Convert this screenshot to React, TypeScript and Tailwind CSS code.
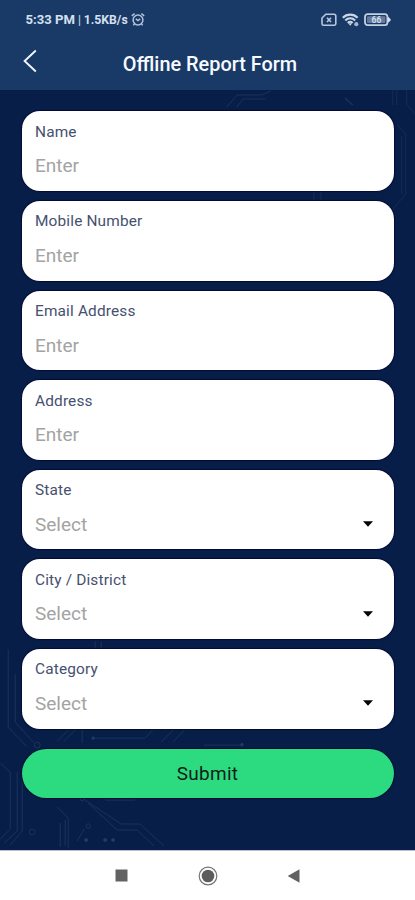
import React from "react";

type Field = { label: string; kind: "input" | "select" };

const fields: Field[] = [
  { label: "Name", kind: "input" },
  { label: "Mobile Number", kind: "input" },
  { label: "Email Address", kind: "input" },
  { label: "Address", kind: "input" },
  { label: "State", kind: "select" },
  { label: "City / District", kind: "select" },
  { label: "Category", kind: "select" },
];

function AlarmIcon() {
  return (
    <svg className="ml-[3px] h-[15px] w-[14px]" viewBox="0 0 14 15" fill="none" stroke="#b3c2da" strokeWidth="1.5">
      <circle cx="7" cy="8" r="4.9" />
      <path d="M.8 3.8 3.6 1.6M13.2 3.8 10.4 1.6M4.8 6.9 7 8.5 9.2 6.9M3.4 12 2.4 13.4M10.6 12l1 1.4" />
    </svg>
  );
}

function SimIcon() {
  return (
    <svg className="h-[14px] w-[16px]" viewBox="0 0 16 14" fill="none" stroke="#bac7db" strokeWidth="1.6">
      <path d="M4.8 1.2h8.2a1.8 1.8 0 0 1 1.8 1.8v7.8a1.4 1.4 0 0 1-1.4 1.4H2.4A1.4 1.4 0 0 1 1 10.8V5z" />
      <path d="m6 4.8 4 4.2M10 4.8 6 9" />
    </svg>
  );
}

function WifiIcon() {
  return (
    <svg className="ml-[5px] h-[14px] w-[17px]" viewBox="0 0 17 14" fill="none" stroke="#cbd6e6" strokeWidth="2.1">
      <path d="M.8 4.7a10.4 10.4 0 0 1 14.8 0M3.3 7.4a6.8 6.8 0 0 1 9.8 0M5.8 9.9a3.4 3.4 0 0 1 4.8 0" />
      <path d="M6.2 10.3h4L8.2 12.8z" fill="#cbd6e6" stroke="none" />
      <circle cx="14.3" cy="11.2" r="2.1" fill="#a5b4cb" stroke="none" />
    </svg>
  );
}

function BatteryIcon() {
  return (
    <svg className="ml-[5px] h-[14px] w-[27px]" viewBox="0 0 27 14" fill="none">
      <rect x="1" y="1.2" width="22.4" height="11" rx="2.6" stroke="#c5d0e1" strokeWidth="1.8" />
      <rect x="3" y="3.3" width="18.4" height="6.8" rx="1" fill="#64799b" />
      <path d="M24 3.8 26.6 6v1.8L24 9.8z" fill="#d5deeb" />
      <text x="12.4" y="9.7" textAnchor="middle" fontFamily="Roboto, sans-serif" fontSize="8.5" fontWeight="700" fill="#d3deeb">
        66
      </text>
    </svg>
  );
}

function CircuitPattern() {
  return (
    <svg className="pointer-events-none absolute inset-0 h-full w-full" viewBox="0 0 415 760" fill="none" stroke="#2a4a6c" strokeWidth="1" opacity=".5">
      <path d="M227 17l10-12h25l9-4M237 17l6-8h23" />
      <path d="M345 8l8 7" strokeWidth="1.6" />
      <path d="M393 0v15M397 0v15M407 0v14l8 10M398 35l8 9v60l-20 24M402 46v58M314 101v9M321 101v9" opacity=".7" />
      <path d="M95 552v9M101 552v9M8 560v78l18 19M15 585v48l18 20M57 652l12-12M64 652l12-12M82 640v14M94 649h51l11-12M161 653l16-16M173 653l14-15M204 656h37" />
      <path d="M0 674l10 9v57l-10 10M17 683v59L4 754M22 690v52L10 756" />
      <path d="M82 709l39 26h19l24 22M88 714l29 27h20l17 16M105 711h30" />
      <path d="M57 718l11 11v30M60 734v24M65 731v26M77 752l7-12" />
      <circle cx="32" cy="743" r="2.9" />
      <circle cx="37" cy="656" r="3" />
      <circle cx="88" cy="737" r="2.2" />
      <circle cx="82" cy="710" r="1.8" />
      <g fill="#42607f" stroke="#35577a">
        <circle cx="93" cy="649" r="1.2" />
        <circle cx="86" cy="751" r="1.5" />
        <circle cx="105" cy="751" r="1.5" />
        <circle cx="113" cy="751" r="1.5" />
        <circle cx="242" cy="655.5" r="1.3" />
      </g>
    </svg>
  );
}

function FieldCard({ label, kind }: Field) {
  return (
    <section className="h-[79.6px] shrink-0 rounded-[18px] bg-white px-[13.5px] pt-[10.4px] shadow-[0_0_1px_1px_#050b35]">
      <div className="text-[15.4px] leading-[20px] tracking-[0.16px] text-[#46506f]">{label}</div>
      <div className="mt-[12.6px] flex items-center justify-between pr-[7px]">
        <span className="text-[19px] leading-[24px] text-[#a3a3a3]">{kind === "input" ? "Enter" : "Select"}</span>
        {kind === "select" && (
          <svg className="mb-[1px] h-[6px] w-[10px]" viewBox="0 0 10 6" fill="#050505">
            <path d="M0 .3h10L5 5.8z" />
          </svg>
        )}
      </div>
    </section>
  );
}

export default function App() {
  return (
    <main className="flex h-[900px] w-[415px] flex-col overflow-hidden bg-[#071e49] font-['Roboto',sans-serif]">
      <header className="h-[90px] shrink-0 bg-[#193a67]">
        <div className="flex h-[40px] items-center justify-between pr-[24px] pl-[25.5px]">
          <div className="flex items-center text-[#d5e0ef]">
            <span className="text-[13.1px] font-bold">5:33 PM</span>
            <span className="mx-[3px] text-[12px]">|</span>
            <span className="text-[12.2px] font-bold">1.5KB/s</span>
            <AlarmIcon />
          </div>
          <div className="flex items-center">
            <SimIcon />
            <WifiIcon />
            <BatteryIcon />
          </div>
        </div>
        <div className="grid h-[48px] grid-cols-[60px_1fr_60px] items-center">
          <svg className="mb-[6px] ml-[23px] h-[24px] w-[14px]" viewBox="0 0 14 24" fill="none" stroke="#f1f6fc" strokeWidth="1.9">
            <path d="M12.8 1.5 1.6 12l11.2 10.5" />
          </svg>
          <h1 className="pt-[1px] pl-[5px] text-center text-[19.9px] font-medium whitespace-nowrap text-[#f7faff]">Offline Report Form</h1>
        </div>
      </header>

      <div className="relative h-[760px] shrink-0 border-b border-[#111b50]">
        <CircuitPattern />
        <form className="relative flex flex-col gap-[10px] px-[21.5px] pt-[21.4px]">
          {fields.map((field) => (
            <FieldCard key={field.label} {...field} />
          ))}
          <button type="button" className="mt-[10.5px] h-[48.5px] rounded-full bg-[#2cdb80] pt-[1px] text-[19px] tracking-[0.3px] text-[#101b18] shadow-[0_0_1px_1px_#050b35]">
            Submit
          </button>
        </form>
      </div>

      <nav className="flex h-[50px] items-center justify-between border-t border-[#b9bccb] bg-white px-[115px]">
        <svg className="h-[13px] w-[13px]" viewBox="0 0 13 13"><path d="M.5.5h12v12H.5z" fill="#626262" /></svg>
        <svg className="h-[20px] w-[20px]" viewBox="0 0 20 20"><circle cx="10" cy="10" r="8.8" fill="none" stroke="#747474" strokeWidth="1.2" /><circle cx="10" cy="10" r="6.3" fill="#5d5d5d" /></svg>
        <svg className="h-[14px] w-[13px]" viewBox="0 0 13 14"><path d="M12.5.3v13.4L.7 7z" fill="#626262" /></svg>
      </nav>
    </main>
  );
}
